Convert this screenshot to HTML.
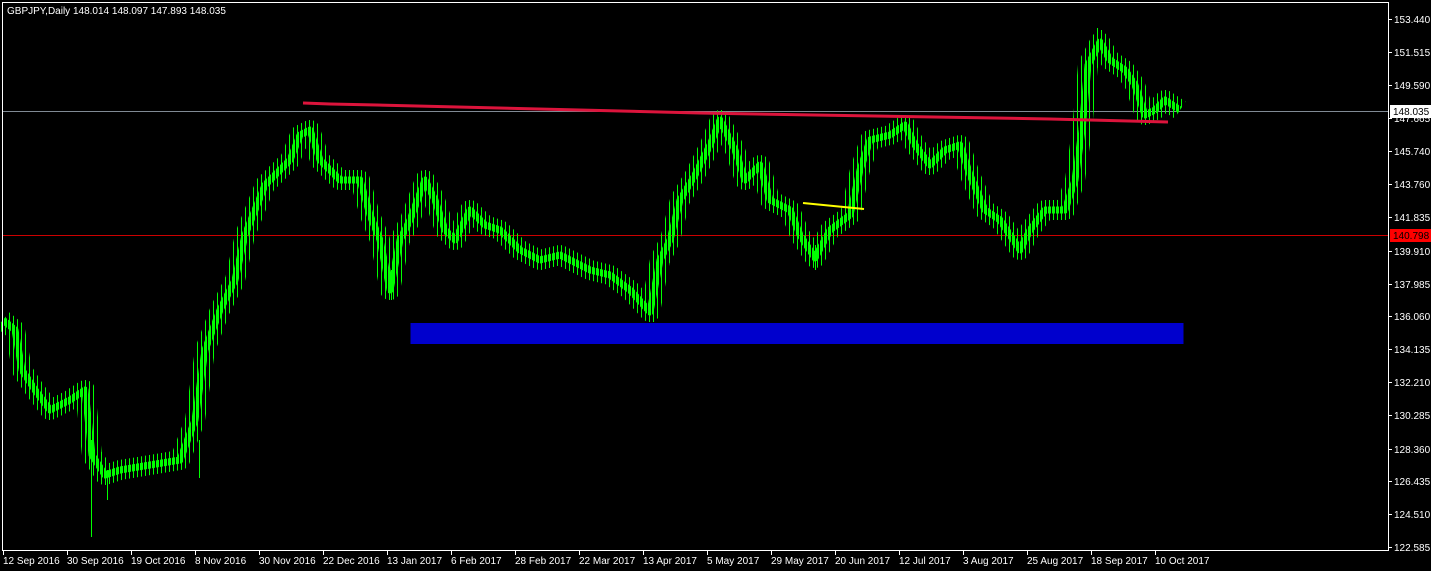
<!DOCTYPE html>
<html><head><meta charset="utf-8"><style>
html,body{margin:0;padding:0;background:#000;width:1431px;height:571px;overflow:hidden}
svg{display:block}
text{font-family:"Liberation Sans",sans-serif;font-size:10px;fill:#fff}
</style></head><body>
<svg width="1431" height="571" xmlns="http://www.w3.org/2000/svg">
<defs>
<pattern id="bp" patternUnits="userSpaceOnUse" x="0" y="0" width="4" height="10"><rect x="0" y="0" width="3" height="10" fill="#00ff00"/></pattern>
<pattern id="wp" patternUnits="userSpaceOnUse" x="0" y="0" width="4" height="10"><rect x="1" y="0" width="1" height="10" fill="#00ff00"/></pattern>
</defs>
<rect x="0" y="0" width="1431" height="571" fill="#000"/>
<rect x="410.5" y="323" width="773" height="21" fill="#0000cd"/>
<line x1="3" y1="111.5" x2="1388" y2="111.5" stroke="#808a94" stroke-width="1"/>
<line x1="3" y1="235.5" x2="1388" y2="235.5" stroke="#c00" stroke-width="1"/>
<g fill="none" stroke-linejoin="round">
<polyline stroke="url(#wp)" stroke-width="20" points="3,320 15,330 22,370 35,390 50,410 70,400 85,390 92,455 105,475 120,470 150,465 180,460 195,420 205,350 220,310 235,280 245,235 255,210 265,185 275,175 290,160 300,135 310,130 320,160 340,180 360,180 370,215 380,240 390,290 400,240 410,220 425,180 435,200 445,230 455,240 470,210 485,225 500,230 520,250 540,260 560,255 590,270 610,275 630,290 650,312 660,260 670,240 680,200 695,175 710,145 720,120 735,150 745,180 760,165 770,200 790,210 800,235 815,258 830,230 850,215 860,170 870,140 890,135 905,125 915,145 930,165 945,150 960,145 970,175 985,210 1000,220 1010,235 1020,250 1030,230 1045,210 1065,210 1075,180 1082,130 1088,65 1100,42 1110,60 1125,70 1135,85 1145,115 1155,110 1165,100 1180,110"/>
<polyline stroke="url(#bp)" stroke-width="7" points="3,320 15,330 22,370 35,390 50,410 70,400 85,390 92,455 105,475 120,470 150,465 180,460 195,420 205,350 220,310 235,280 245,235 255,210 265,185 275,175 290,160 300,135 310,130 320,160 340,180 360,180 370,215 380,240 390,290 400,240 410,220 425,180 435,200 445,230 455,240 470,210 485,225 500,230 520,250 540,260 560,255 590,270 610,275 630,290 650,312 660,260 670,240 680,200 695,175 710,145 720,120 735,150 745,180 760,165 770,200 790,210 800,235 815,258 830,230 850,215 860,170 870,140 890,135 905,125 915,145 930,165 945,150 960,145 970,175 985,210 1000,220 1010,235 1020,250 1030,230 1045,210 1065,210 1075,180 1082,130 1088,65 1100,42 1110,60 1125,70 1135,85 1145,115 1155,110 1165,100 1180,110"/>
</g>
<path stroke="#00ff00" stroke-width="1" fill="none" d="M91.5 440V537M107.5 470V500M391.5 270V300M199.5 440V478M1101.5 30V60M1097.5 28V55M653.5 300V322M815.5 245V270"/>
<polyline points="303,103 330,104 377,105 700,113 1050,119 1168,122" fill="none" stroke="#dc143c" stroke-width="3"/>
<line x1="803" y1="203" x2="864" y2="209" stroke="#ffff00" stroke-width="2"/>
<rect x="2.5" y="2.5" width="1386" height="548" fill="none" stroke="#fff" stroke-width="1"/>
<text x="7" y="14">GBPJPY,Daily  148.014 148.097 147.893 148.035</text>
<path fill="none" stroke="#fff" stroke-width="1" d="M1388 19.5H1392M1388 52.5H1392M1388 85.5H1392M1388 118.5H1392M1388 151.5H1392M1388 184.5H1392M1388 217.5H1392M1388 251.5H1392M1388 284.5H1392M1388 316.5H1392M1388 349.5H1392M1388 382.5H1392M1388 415.5H1392M1388 449.5H1392M1388 481.5H1392M1388 514.5H1392M1388 547.5H1392M3.5 551V555M67.5 551V555M131.5 551V555M195.5 551V555M259.5 551V555M323.5 551V555M387.5 551V555M451.5 551V555M515.5 551V555M579.5 551V555M643.5 551V555M707.5 551V555M771.5 551V555M835.5 551V555M899.5 551V555M963.5 551V555M1027.5 551V555M1091.5 551V555M1155.5 551V555"/>
<g>
<text x="1394" y="23">153.440</text><text x="1394" y="56">151.515</text><text x="1394" y="89">149.590</text><text x="1394" y="122">147.665</text><text x="1394" y="155">145.740</text><text x="1394" y="188">143.760</text><text x="1394" y="221">141.835</text><text x="1394" y="255">139.910</text><text x="1394" y="288">137.985</text><text x="1394" y="320">136.060</text><text x="1394" y="353">134.135</text><text x="1394" y="386">132.210</text><text x="1394" y="419">130.285</text><text x="1394" y="453">128.360</text><text x="1394" y="485">126.435</text><text x="1394" y="518">124.510</text><text x="1394" y="551">122.585</text>
<text x="3" y="564">12 Sep 2016</text><text x="67" y="564">30 Sep 2016</text><text x="131" y="564">19 Oct 2016</text><text x="195" y="564">8 Nov 2016</text><text x="259" y="564">30 Nov 2016</text><text x="323" y="564">22 Dec 2016</text><text x="387" y="564">13 Jan 2017</text><text x="451" y="564">6 Feb 2017</text><text x="515" y="564">28 Feb 2017</text><text x="579" y="564">22 Mar 2017</text><text x="643" y="564">13 Apr 2017</text><text x="707" y="564">5 May 2017</text><text x="771" y="564">29 May 2017</text><text x="835" y="564">20 Jun 2017</text><text x="899" y="564">12 Jul 2017</text><text x="963" y="564">3 Aug 2017</text><text x="1027" y="564">25 Aug 2017</text><text x="1091" y="564">18 Sep 2017</text><text x="1155" y="564">10 Oct 2017</text>
</g>
<rect x="1390" y="105" width="41" height="13" fill="#fff"/>
<text x="1393" y="115" style="fill:#000">148.035</text>
<rect x="1390" y="229" width="41" height="13" fill="#f00"/>
<text x="1393" y="239" style="fill:#000">140.798</text>
</svg>
</body></html>
